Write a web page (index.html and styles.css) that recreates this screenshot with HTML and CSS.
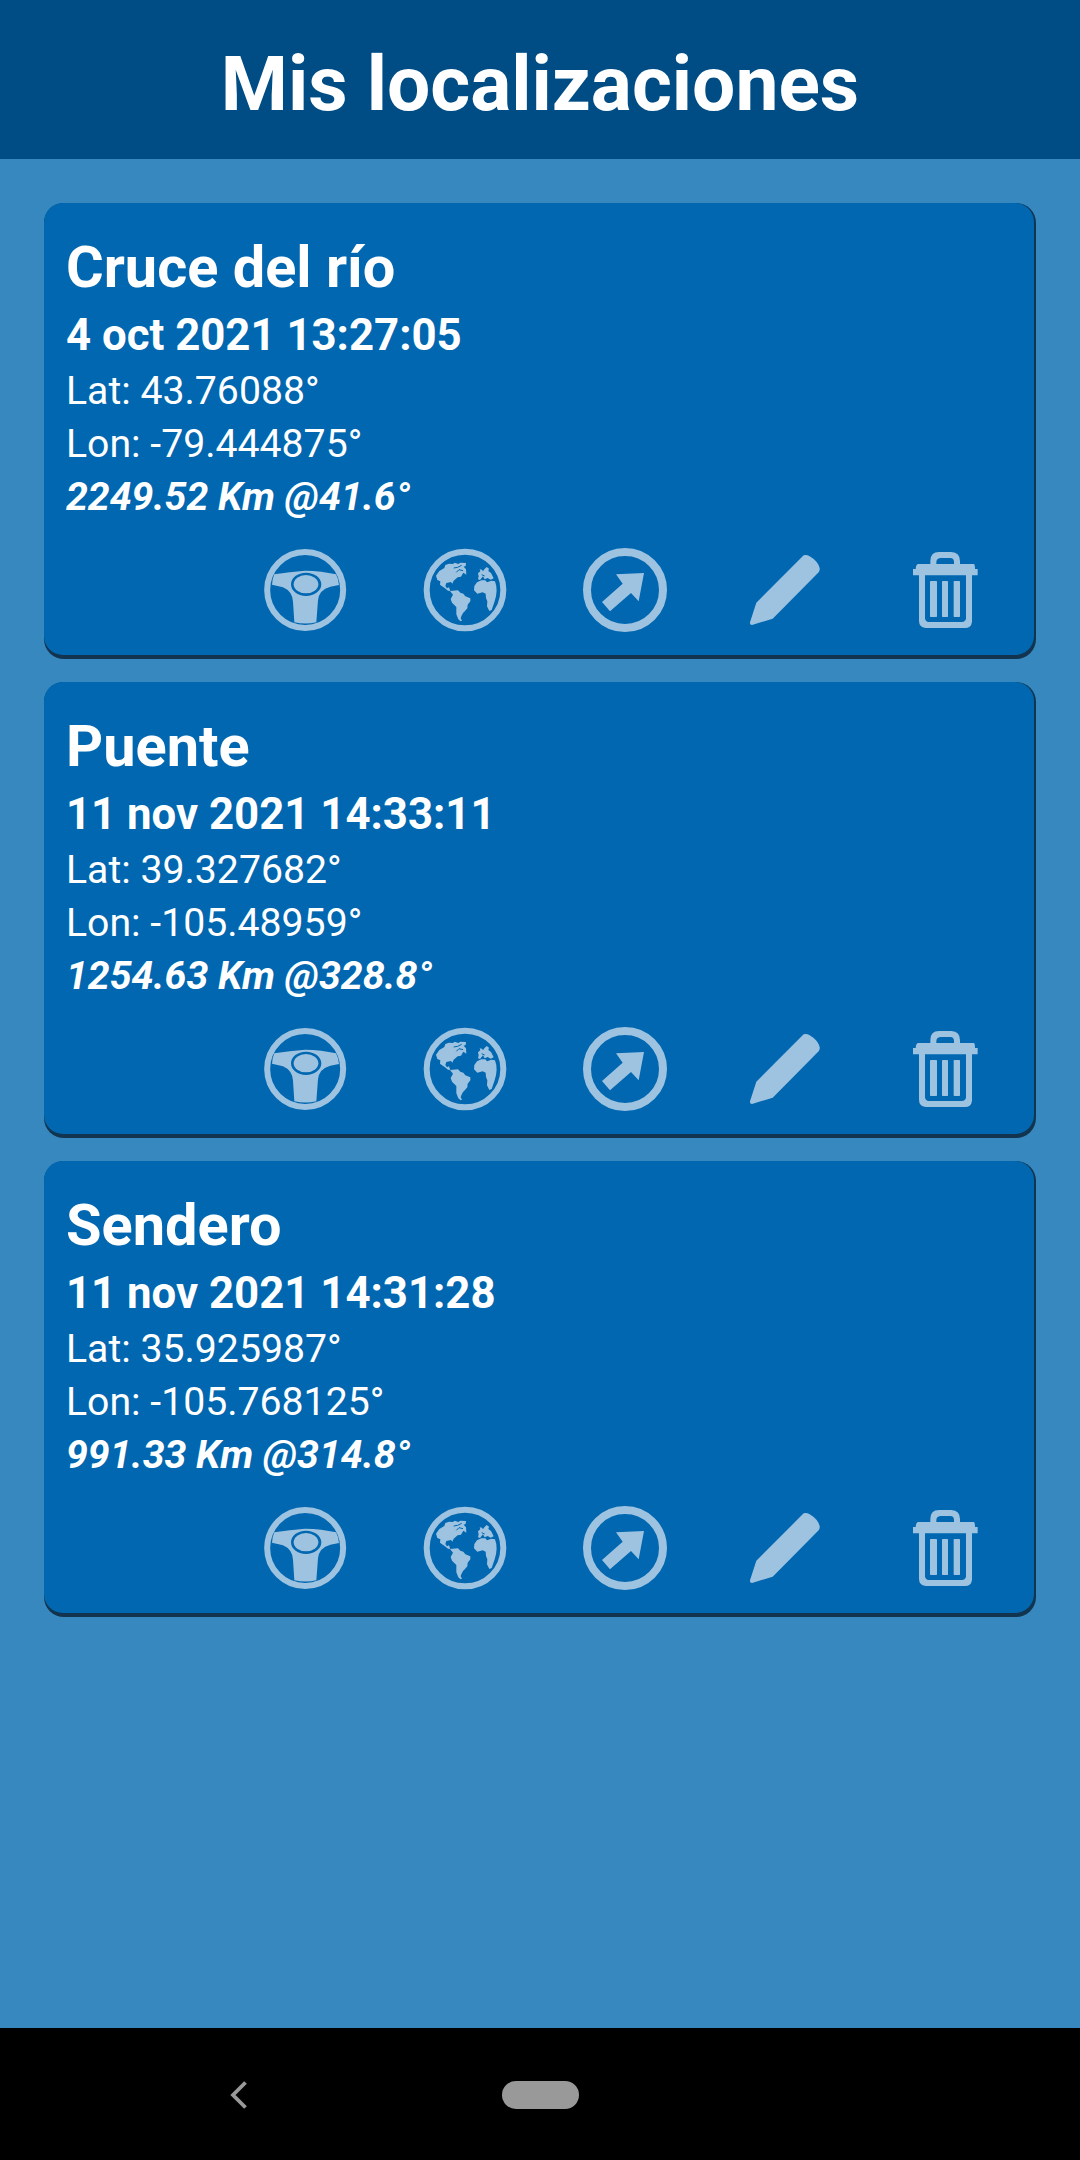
FILE: index.html
```
<!DOCTYPE html>
<html lang="es">
<head>
<meta charset="utf-8">
<title>Mis localizaciones</title>
<link rel="stylesheet" href="styles.css">
</head>
<body>
<svg class="sprite" aria-hidden="true">
  <symbol id="drive" viewBox="0 0 300 300">
    <circle cx="150.500" cy="150" r="114" fill="none" stroke="currentColor" stroke-width="18"/>
    <path fill="currentColor" fill-rule="evenodd" d="M58 103Q105 96 150 92Q200 93 243 103Q250 115 252 135L226 140Q192 149 189 181L184 247Q152 254 118 247L114 185Q112 154 84 142L51 134Q52 116 58 103ZM153 98C128 98 108 113 108 133S128 168 153 168 199 153 199 133 178 98 153 98Z"/>
    <ellipse cx="153" cy="132.500" rx="37" ry="27.500" fill="currentColor"/>
  </symbol>
  <symbol id="globe" viewBox="0 0 300 300">
    <circle cx="150" cy="150" r="115" fill="none" stroke="currentColor" stroke-width="18"/>
    <g fill="currentColor">
      <path d="M63 107L73 93L88 84L91 75L102 71L114 72L119 68L130 72L136 68L153 69L152 78L146 80L153 88L154 104L145 98L138 110L128 112L116 122L112 131L108 126L94 129L91 138L96 145L102 142L106 153L99 152L88 143L80 138L75 134L76 124L67 120Z"/>
      <path d="M113 152L129 151L136 158L145 161L151 169L166 175L166 184L158 194L157 205L150 213L144 219L139 229L137 235L141 242L137 244L130 238L124 223L124 201L111 188L107 177L114 164L105 153Z"/>
      <path d="M189 100L196 94L194 88L201 89L204 94L208 88L215 81L222 86L220 93L228 99L236 115L227 119L218 114L209 118L204 109L195 120L189 118L191 109Z"/>
      <path d="M186 127L199 121L211 121L216 127L229 122L240 124Q250 150 239 184L230 210L223 213L216 199L217 184L213 174L212 161L203 157L187 161L177 151L178 138Z"/>
    </g>
    <path d="M116 84l12-2 12-6M124 97l8-8 12 3M200 104l9 4" fill="none" stroke="#0067b0" stroke-width="3"/>
  </symbol>
  <symbol id="compass" viewBox="0 0 300 300">
    <circle cx="150" cy="150" r="114" fill="none" stroke="currentColor" stroke-width="24"/>
    <path fill="currentColor" d="M123 103L207 99L191 184L168 159L105 214L81 186L143 131Z"/>
  </symbol>
  <symbol id="edit" viewBox="0 0 300 300">
    <path fill="currentColor" d="M206 46Q214 43 224 49Q248 63 254 84Q255 91 251 97L113 236L51 255Q44 255 45 247L64 188Z"/>
  </symbol>
  <symbol id="trash" viewBox="0 0 300 300">
    <g fill="currentColor">
      <path d="M106 72V63Q106 36 132 36H169Q195 38 195 63V72H236Q240 72 240 87H248V106H231V245Q229 264 210 264H92Q72 261 72 242V106H54V87H62Q63 72 70 72ZM124 72H177V67Q177 54 166 54H136Q124 55 124 67ZM90 106V236Q93 246 103 246H201Q211 245 213 236V106Z" fill-rule="evenodd"/>
      <rect x="105" y="123" width="21" height="108" rx="2"/>
      <rect x="141" y="123" width="18" height="108" rx="2"/>
      <rect x="176" y="123" width="19" height="108" rx="2"/>
    </g>
  </symbol>
</svg>

<div class="screen">
  <header class="header"><h1 class="title">Mis localizaciones</h1></header>

  <main class="list">
    <article class="card">
      <div class="card-body">
        <h2 class="name">Cruce del río</h2>
        <p class="date">4 oct 2021 13:27:05</p>
        <p class="coord">Lat: 43.76088°</p>
        <p class="coord">Lon: -79.444875°</p>
        <p class="distance">2249.52 Km @41.6°</p>
        <div class="actions">
          <svg class="icon"><use href="#drive"/></svg>
          <svg class="icon"><use href="#globe"/></svg>
          <svg class="icon"><use href="#compass"/></svg>
          <svg class="icon"><use href="#edit"/></svg>
          <svg class="icon"><use href="#trash"/></svg>
        </div>
      </div>
    </article>

    <article class="card">
      <div class="card-body">
        <h2 class="name">Puente</h2>
        <p class="date">11 nov 2021 14:33:11</p>
        <p class="coord">Lat: 39.327682°</p>
        <p class="coord">Lon: -105.48959°</p>
        <p class="distance">1254.63 Km @328.8°</p>
        <div class="actions">
          <svg class="icon"><use href="#drive"/></svg>
          <svg class="icon"><use href="#globe"/></svg>
          <svg class="icon"><use href="#compass"/></svg>
          <svg class="icon"><use href="#edit"/></svg>
          <svg class="icon"><use href="#trash"/></svg>
        </div>
      </div>
    </article>

    <article class="card">
      <div class="card-body">
        <h2 class="name">Sendero</h2>
        <p class="date">11 nov 2021 14:31:28</p>
        <p class="coord">Lat: 35.925987°</p>
        <p class="coord">Lon: -105.768125°</p>
        <p class="distance">991.33 Km @314.8°</p>
        <div class="actions">
          <svg class="icon"><use href="#drive"/></svg>
          <svg class="icon"><use href="#globe"/></svg>
          <svg class="icon"><use href="#compass"/></svg>
          <svg class="icon"><use href="#edit"/></svg>
          <svg class="icon"><use href="#trash"/></svg>
        </div>
      </div>
    </article>
  </main>

  <nav class="navbar">
    <svg class="back" viewBox="0 0 18 28"><path d="M15.500 1.500L3 14L15.500 26.500" fill="none" stroke="currentColor" stroke-width="3.800"/></svg>
    <span class="home"></span>
    <span></span>
  </nav>
</div>
</body>
</html>
```

FILE: styles.css
```
* {
  box-sizing: border-box;
  margin: 0;
}

body {
  font-family: Roboto, "Liberation Sans", sans-serif;
  color: #fff;
  background: #3788bf;
}

.sprite {
  display: none;
}

.screen {
  display: flex;
  flex-direction: column;
  height: 2160px;
}

.header {
  height: 159px;
  padding-top: 9px;
  background: #004c84;
  text-align: center;
}

.title {
  font-size: 76.7px;
  font-weight: 700;
  line-height: 150px;
}

.list {
  flex: 1;
  display: flex;
  flex-direction: column;
  gap: 23px;
  padding: 44px;
}

/* The darker outer shape shows as an edge on the right and bottom. */
.card {
  padding: 0 2px 4px 0;
  border-radius: 20px;
  background: #12344f;
}

.card-body {
  height: 452px;
  padding: 26px 39px 0 22px;
  border-radius: 19px;
  background: #0067b0;
}

.name {
  font-size: 57.7px;
  line-height: 77px;
}

.date {
  margin-bottom: 1px;
  font-size: 43.75px;
  font-weight: 700;
  line-height: 58px;
}

.coord,
.distance {
  font-size: 39.2px;
  line-height: 53px;
}

.distance {
  font-size: 39.3px;
  font-weight: 700;
  font-style: italic;
}

.actions {
  display: flex;
  justify-content: flex-end;
  gap: 60px;
  margin-top: 16px;
}

.icon {
  width: 100px;
  height: 100px;
  color: #9dc3e1;
}

.navbar {
  display: grid;
  grid-template-columns: 502px 77px 1fr;
  align-items: center;
  height: 132px;
  padding-top: 1px;
  background: #000;
  color: #999;
}

.back {
  width: 18px;
  height: 28px;
  margin-left: 230px;
}

.home {
  height: 28px;
  border-radius: 14px;
  background: #999;
}
```
